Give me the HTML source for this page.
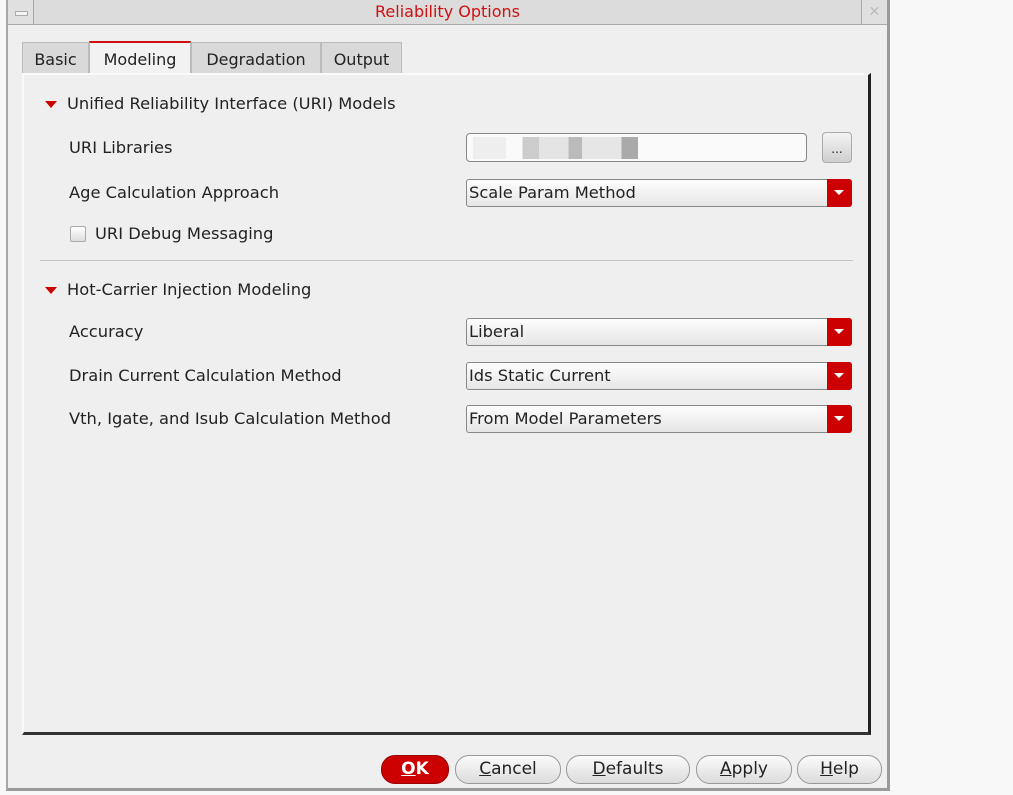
<!DOCTYPE html>
<html><head><meta charset="utf-8"><style>
*{box-sizing:border-box;margin:0;padding:0}
body{width:1013px;height:795px;background:#f8f8f8;position:relative;font-family:"DejaVu Sans","Liberation Sans",sans-serif;font-size:15px;color:#222;overflow:hidden}
.win{position:absolute;left:6px;top:0;width:884px;height:791px;background:#efefef;border-left:2px solid #a8a8a8;border-right:3px solid #9a9a9a;border-bottom:3px solid #9a9a9a}
.tb{position:absolute;left:0;top:0;width:879px;height:25px;background:#dcdcdc;border-bottom:1px solid #aaa}
.tb .t{position:absolute;left:0;right:0;top:2px;text-align:center;color:#d01010;font-size:16px}
.min{position:absolute;left:0;top:0;width:26px;height:24px;border-right:1px solid #aaa;background:#e0e0e0}
.min:after{content:"";position:absolute;left:7px;top:11px;width:11px;height:3px;background:#f4f4f4;border:1px solid #aaa}
.cls{position:absolute;right:0;top:0;width:26px;height:24px;border-left:1px solid #aaa;background:#e0e0e0;color:#bbb;text-align:center;font-size:14px;line-height:24px}
.tab{position:absolute;top:42px;height:31px;background:#d9d9d9;border:1px solid #bbb;border-bottom:none;text-align:center;line-height:34px;font-size:16px;color:#222}
.tab.on{background:#f2f2f2;border-top:2px solid #d01010;top:41px;height:33px;line-height:34px}
.panel{position:absolute;left:22px;top:73px;width:849px;height:662px;border-left:2px solid #fafafa;border-top:2px solid #fafafa;border-right:3px solid #222;border-bottom:3px solid #333;background:#efefef}
.l{position:absolute;font-size:16.3px;white-space:nowrap}
.tri{position:absolute;width:0;height:0;border-left:6px solid transparent;border-right:6px solid transparent;border-top:7px solid #c00}
.dd{position:absolute;left:466px;width:386px;height:28px;border:1px solid #888;border-radius:3px;background:linear-gradient(#fdfdfd,#e6e6e6);font-size:16.3px;line-height:26px;padding-left:2px}
.dd .a{position:absolute;right:-1px;top:-1px;width:25px;height:28px;background:#c00;border-radius:0 3px 3px 0}
.dd .a:after{content:"";position:absolute;left:7px;top:11px;border-left:5px solid transparent;border-right:5px solid transparent;border-top:5px solid #fff}
.btn{position:absolute;top:755px;height:29px;border:1px solid #999;border-radius:14px;background:linear-gradient(#fbfbfb,#dcdcdc);text-align:center;line-height:27px;font-size:17px}
.btn u{text-decoration:underline}
</style></head><body>
<div class="win">
 <div class="tb"><div class="min"></div><div class="t">Reliability Options</div><div class="cls">✕</div></div>
</div>
<div class="tab" style="left:22px;width:67px">Basic</div>
<div class="tab on" style="left:89px;width:102px">Modeling</div>
<div class="tab" style="left:191px;width:130px">Degradation</div>
<div class="tab" style="left:321px;width:81px">Output</div>
<div class="panel"></div>
<div class="tri" style="left:45px;top:101px"></div>
<div class="l" style="left:67px;top:94px">Unified Reliability Interface (URI) Models</div>
<div class="l" style="left:69px;top:138px">URI Libraries</div>
<div style="position:absolute;left:466px;top:133px;width:341px;height:29px;border:1px solid #888;border-radius:4px;background:#fafafa"></div>
<div style="position:absolute;left:473px;top:137px;width:165px;height:22px;background:linear-gradient(90deg,#eee 0 20%,#fafafa 20% 30%,#ccc 30% 40%,#e4e4e4 40% 58%,#bbb 58% 66%,#e6e6e6 66% 90%,#aaa 90%)"></div>
<div style="position:absolute;left:822px;top:132px;width:30px;height:31px;border:1px solid #aaa;border-radius:4px;background:linear-gradient(#f4f4f4,#cfcfcf);text-align:center;font-size:12px;line-height:32px">...</div>
<div class="l" style="left:69px;top:183px">Age Calculation Approach</div>
<div class="dd" style="top:179px">Scale Param Method<div class="a"></div></div>
<div style="position:absolute;left:70px;top:226px;width:16px;height:16px;border:1px solid #aaa;border-radius:2px;background:linear-gradient(#fff,#ddd)"></div>
<div class="l" style="left:95px;top:224px">URI Debug Messaging</div>
<div style="position:absolute;left:40px;top:260px;width:813px;height:1px;background:#c4c4c4"></div>
<div class="tri" style="left:45px;top:287px"></div>
<div class="l" style="left:67px;top:280px">Hot-Carrier Injection Modeling</div>
<div class="l" style="left:69px;top:322px">Accuracy</div>
<div class="dd" style="top:318px">Liberal<div class="a"></div></div>
<div class="l" style="left:69px;top:366px">Drain Current Calculation Method</div>
<div class="dd" style="top:362px">Ids Static Current<div class="a"></div></div>
<div class="l" style="left:69px;top:409px">Vth, Igate, and Isub Calculation Method</div>
<div class="dd" style="top:405px">From Model Parameters<div class="a"></div></div>
<div class="btn" style="left:381px;width:68px;background:#c00;border-color:#900;color:#fff;font-weight:bold"><u>O</u>K</div>
<div class="btn" style="left:455px;width:106px"><u>C</u>ancel</div>
<div class="btn" style="left:566px;width:124px"><u>D</u>efaults</div>
<div class="btn" style="left:696px;width:96px"><u>A</u>pply</div>
<div class="btn" style="left:797px;width:85px"><u>H</u>elp</div>
</body></html>
